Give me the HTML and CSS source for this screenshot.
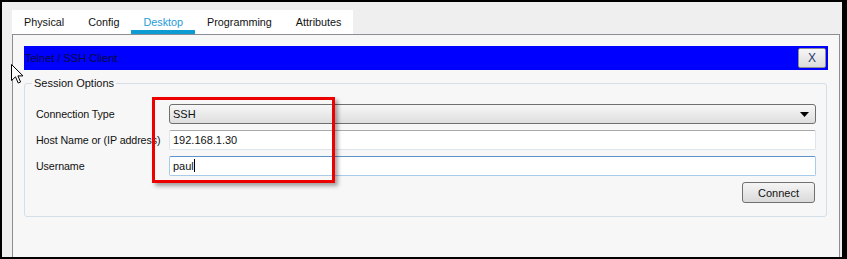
FILE: index.html
```html
<!DOCTYPE html>
<html lang="en">
  <head>
    <meta charset="UTF-8" />
    <title>Telnet / SSH Client</title>
    <link rel="stylesheet" href="styles.css">
  </head>
  <body>
    <div class="screen">
      <div class="tabs">
        <div class="tab">Physical</div>
        <div class="tab">Config</div>
        <div class="tab active">Desktop</div>
        <div class="tab">Programming</div>
        <div class="tab">Attributes</div>
      </div>

      <div class="panel">
        <div class="titlebar">
          <span class="title">Telnet / SSH Client</span>
          <button class="close-btn">X</button>
        </div>

        <fieldset class="options">
          <legend>Session Options</legend>
          <div class="options-body">
            <div class="row">
              <label>Connection Type</label>
              <div class="select">
                <span>SSH</span>
                <svg width="9" height="5" viewBox="0 0 9 5"><path d="M0 0h9L4.5 5z" fill="#000"/></svg>
              </div>
            </div>
            <div class="row">
              <label>Host Name or (IP address)</label>
              <div class="field">192.168.1.30</div>
            </div>
            <div class="row">
              <label>Username</label>
              <div class="field focused">paul<span class="caret"></span></div>
            </div>
            <div class="actions">
              <button class="connect-btn">Connect</button>
            </div>
          </div>
        </fieldset>
      </div>

      <div class="highlight"></div>

      <svg class="cursor" width="13" height="20" viewBox="0 0 13 20">
        <path d="M0.5 0.5 L0.5 16.5 L4.5 12.8 L7.2 19 L9.6 18 L6.9 11.9 L12 11.9 Z" fill="#fff" stroke="#000" stroke-width="1"/>
      </svg>
    </div>
  </body>
</html>
```

FILE: styles.css
```css
* {
  box-sizing: border-box;
}
body {
  margin: 0;
  font-family: "Liberation Sans", Arial, sans-serif;
  font-size: 11px;
  color: #111;
}
.screen {
  position: relative;
  width: 847px;
  height: 259px;
  border: 2px solid #000;
  border-right-width: 5px;
  background: #efefef;
  padding: 8px 2px 0 10px;
  display: flex;
  flex-direction: column;
}
.tabs {
  display: flex;
  align-self: flex-start;
  background: #fff;
  height: 24px;
}
.tab {
  padding: 0 12px;
  line-height: 24px;
  height: 24px;
  color: #111;
  font-size: 10.8px;
}
.tab.active {
  color: #1e9bd7;
  box-shadow: inset 0 -4px 0 #0d9bd4;
}
.panel {
  flex: 1;
  background: #f7f7f7;
  border: 1px solid #8c8c94;
  border-bottom: none;
  padding: 11px 11px 0 11px;
}
.titlebar {
  height: 24px;
  background: #0000ff;
  display: flex;
  align-items: center;
  justify-content: space-between;
  padding: 0 2px 0 1px;
}
.title {
  color: #0a0a3a;
}
.close-btn {
  width: 28px;
  height: 20px;
  padding: 0;
  font-family: "Liberation Sans", Arial, sans-serif;
  font-size: 12px;
  color: #2a3a70;
  border: 1px solid #8e8e8e;
  border-radius: 2px;
  background: linear-gradient(#f6f6f6, #dcdcdc);
}
.options {
  margin: 7px 1px 0 0;
  padding: 0;
  border: 1px solid #d4dfe7;
  border-radius: 3px;
  min-width: 0;
}
.options legend {
  margin-left: 7px;
  padding: 0 2px;
  color: #111;
  line-height: 13px;
}
.options-body {
  padding: 14px 10px 13px 11px;
  display: flex;
  flex-direction: column;
  gap: 6px;
}
.row {
  display: grid;
  grid-template-columns: 133px 1fr;
  align-items: center;
  height: 20px;
}
.row label {
  font-size: 10.7px;
  letter-spacing: -0.1px;
}
.select {
  height: 20px;
  border: 1px solid #6f6f6f;
  border-radius: 3px;
  background: linear-gradient(#f7f7f7, #dedede);
  display: flex;
  align-items: center;
  justify-content: space-between;
  padding: 0 6px 0 3px;
}
.field {
  height: 20px;
  background: #fff;
  border: 1px solid #dde5ec;
  border-top-color: #a9a9a9;
  border-radius: 2px;
  padding: 0 3px;
  line-height: 18px;
}
.field.focused {
  border-color: #a9cbeb;
  border-top-color: #5d93c8;
}
.caret {
  display: inline-block;
  width: 1px;
  height: 13px;
  background: #000;
  vertical-align: -2px;
}
.actions {
  display: flex;
  justify-content: flex-end;
  margin-top: 0;
  padding-right: 1px;
}
.connect-btn {
  width: 73px;
  height: 21px;
  padding: 0;
  font-family: "Liberation Sans", Arial, sans-serif;
  font-size: 11px;
  color: #111;
  border: 1px solid #707070;
  border-radius: 3px;
  background: linear-gradient(#f5f5f5, #dadada);
}
.highlight {
  position: absolute;
  left: 150px;
  top: 95px;
  width: 183px;
  height: 86px;
  border: 3px solid #ec0000;
  box-shadow: 3px 3px 4px rgba(0, 0, 0, 0.35);
}
.cursor {
  position: absolute;
  left: 9px;
  top: 62px;
}
```
